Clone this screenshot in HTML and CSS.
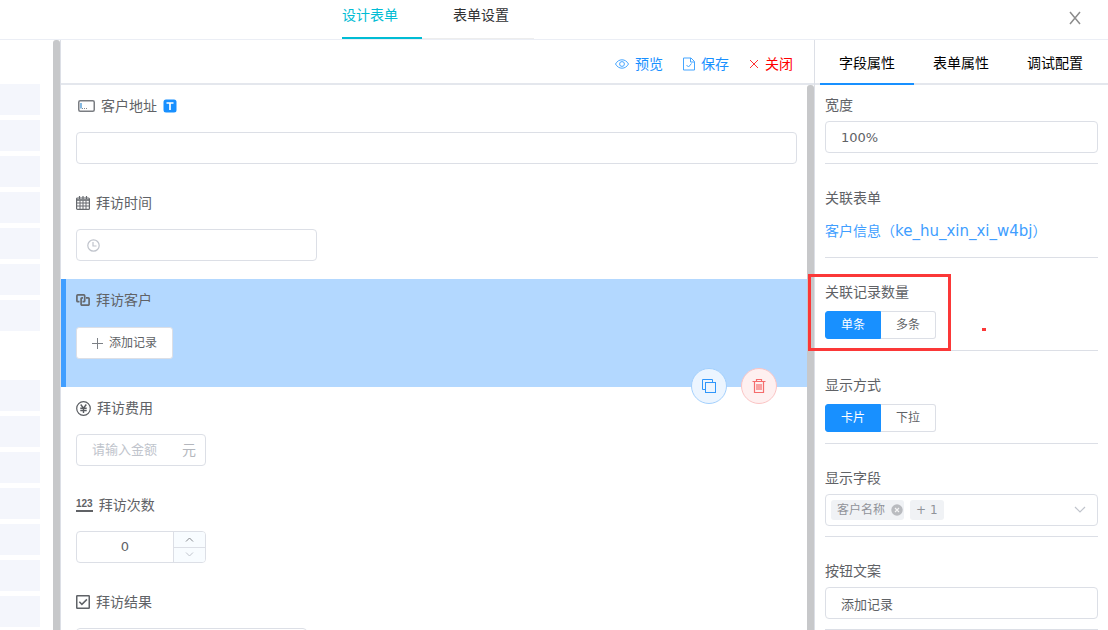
FILE: index.html
```html
<!DOCTYPE html>
<html lang="zh-CN">
<head>
<meta charset="utf-8">
<meta name="viewport" content="width=device-width, initial-scale=1">
<title>设计表单</title>
<link rel="stylesheet" href="styles.css">
</head>
<body>
<header class="topbar">
  <nav class="top-tabs">
    <button class="top-tab is-active" type="button">设计表单</button>
    <button class="top-tab" type="button">表单设置</button>
  </nav>
  <button class="window-close" type="button" aria-label="关闭窗口">
    <svg width="14" height="14" viewBox="0 0 14 14"><path d="M2 1l10 12M12 1L2 13" fill="none" stroke="#8c8c8c" stroke-width="1.5"/></svg>
  </button>
</header>

<div class="workspace">
  <aside class="palette">
    <div class="palette-list">
      <div class="palette-group">
        <div class="palette-item"></div><div class="palette-item"></div><div class="palette-item"></div><div class="palette-item"></div><div class="palette-item"></div><div class="palette-item"></div><div class="palette-item"></div>
      </div>
      <div class="palette-group">
        <div class="palette-item"></div><div class="palette-item"></div><div class="palette-item"></div><div class="palette-item"></div><div class="palette-item"></div><div class="palette-item"></div><div class="palette-item"></div>
      </div>
    </div>
    <div class="scrollbar"></div>
  </aside>

  <main class="designer">
    <div class="toolbar">
      <button class="tool" type="button">
        <svg width="14" height="14" viewBox="0 0 14 14" fill="none" stroke="currentColor" opacity=".8"><path d="M.5 7C2 4.300 4.300 2.800 7 2.800S12 4.300 13.500 7C12 9.700 9.700 11.200 7 11.200S2 9.700.5 7z"/><circle cx="7" cy="7" r="2.400"/></svg>
        预览
      </button>
      <button class="tool" type="button">
        <svg width="12" height="14" viewBox="0 0 12 14" fill="none" stroke="currentColor" opacity=".8"><path d="M.5 1h7.500l3.500 3.500V13H.5zM7.500 1v4h4M3.500 8l2 2 3-3.500"/></svg>
        保存
      </button>
      <button class="tool tool-danger" type="button">
        <svg width="10" height="10" viewBox="0 0 10 10" fill="none" stroke="currentColor" opacity=".8"><path d="M1 1l8 8M9 1L1 9"/></svg>
        关闭
      </button>
    </div>

    <div class="canvas">
      <form class="form">
        <section class="field">
          <label class="field-label" for="address">
            <svg class="icon-text" width="17" height="12" viewBox="0 0 17 12" fill="none"><rect x=".75" y=".75" width="15.500" height="10.500" rx="1.500" stroke="#7a7d82" stroke-width="1.500"/><path d="M3 3v5.500" stroke="#5fa3d8" stroke-width="1.500"/><path d="M4 8.500h5" stroke="#85888d" stroke-dasharray="1 1"/></svg>
            客户地址
            <svg width="14" height="14" viewBox="0 0 14 14"><rect x=".5" y=".5" width="13" height="13" rx="2.500" fill="#1890ff"/><path d="M3.500 4h7M7 4v7" fill="none" stroke="#fff" stroke-width="1.700"/></svg>
          </label>
          <input class="control" id="address" type="text">
        </section>

        <section class="field">
          <label class="field-label" for="visit-time">
            <svg width="14" height="14" viewBox="0 0 14 14" fill="none" stroke="#66696e"><rect x=".6" y="2" width="12.800" height="11.400" rx="1" stroke-width="1.200"/><path d="M1 4h12" stroke-width="1.600"/><path d="M3.500 0v3M7 0v3M10.500 0v3" stroke-width="1.200"/><path d="M1 7h12M1 10h12M4 4.500V13M7 4.500V13M10 4.500V13"/></svg>
            拜访时间
          </label>
          <div class="control date-box">
            <svg width="13" height="13" viewBox="0 0 13 13" fill="none" stroke="#c0c4cc" stroke-width="1.200"><circle cx="6.500" cy="6.500" r="5.700"/><path d="M6 3v4h3.500"/></svg>
            <input class="bare-input" id="visit-time" type="text">
          </div>
        </section>

        <section class="field is-selected">
          <span class="field-label">
            <svg width="14" height="12" viewBox="0 0 14 12" fill="none" stroke="#66696e" stroke-width="1.700"><path d="M3.500 7.700H1.800A1 1 0 0 1 .9 6.800V1.800a1 1 0 0 1 .9-.9h6a1 1 0 0 1 .9.900v5a1 1 0 0 1-.9.900H6.500"/><path d="M10 3.900h2.200a.9.9 0 0 1 .9.900v5.400a.9.9 0 0 1-.9.900H6a.9.900 0 0 1-.9-.9V4.800a.9.900 0 0 1 .9-.9h1"/></svg>
            拜访客户
          </span>
          <button class="add-record" type="button">
            <svg width="11" height="11" viewBox="0 0 11 11"><path d="M5.500 0v11M0 5.500h11" stroke="#7c8085"/></svg>
            添加记录
          </button>
          <div class="field-actions">
            <button class="round round-copy" type="button" aria-label="复制">
              <svg width="16" height="16" viewBox="0 0 16 16" fill="none" stroke="#2f96fb"><path d="M4 11.500H1.500v-10h10V4"/><rect x="4.500" y="4.500" width="10" height="10"/></svg>
            </button>
            <button class="round round-delete" type="button" aria-label="删除">
              <svg width="14" height="16" viewBox="0 0 14 16" fill="none" stroke="#f56c6c"><path d="M.5 3.500h13M4.500 3.500v-2h5v2M2.500 3.500v11h9v-11M5 6v6M7 6v6M9 6v6" stroke-width="1.200"/></svg>
            </button>
          </div>
        </section>

        <section class="field">
          <label class="field-label" for="cost">
            <svg width="15" height="15" viewBox="0 0 15 15" fill="none" stroke="#5a5d62"><circle cx="7.500" cy="7.500" r="6.800" stroke-width="1.200"/><path d="M4.700 3.500l2.800 3.600 2.800-3.600M7.500 7v5M4.300 7.300h6.400M4.300 9.500h6.400" stroke-width="1.400"/></svg>
            拜访费用
          </label>
          <div class="control money-box">
            <input class="bare-input" id="cost" type="text" placeholder="请输入金额">
            <span class="unit">元</span>
          </div>
        </section>

        <section class="field">
          <label class="field-label" for="count">
            <span class="icon-123" aria-hidden="true">123</span>
            拜访次数
          </label>
          <div class="control number-box">
            <input class="bare-input" id="count" type="text" inputmode="numeric" value="0">
            <div class="steps">
              <button class="step" type="button" aria-label="增加"><svg width="9" height="5" viewBox="0 0 9 5"><path d="M1 4.500l3.500-3.500L8 4.500" fill="none" stroke="#85888d"/></svg></button>
              <button class="step" type="button" aria-label="减少"><svg width="9" height="5" viewBox="0 0 9 5"><path d="M1 .5L4.500 4 8 .5" fill="none" stroke="#c0c4cc"/></svg></button>
            </div>
          </div>
        </section>

        <section class="field">
          <label class="field-label" for="result">
            <svg width="14" height="14" viewBox="0 0 14 14" fill="none" stroke="#5f6267"><rect x=".75" y=".75" width="12.500" height="12.500" rx=".5" stroke-width="1.500"/><path d="M3.300 6.800l2.600 2.600 5-5" stroke-width="1.500"/></svg>
            拜访结果
          </label>
          <input class="control result-box" id="result" type="text">
        </section>
      </form>
      <div class="scrollbar"></div>
    </div>
  </main>

  <aside class="inspector">
    <nav class="side-tabs">
      <button class="side-tab is-active" type="button">字段属性</button>
      <button class="side-tab" type="button">表单属性</button>
      <button class="side-tab" type="button">调试配置</button>
    </nav>
    <form class="props">
      <div class="prop">
        <label class="prop-label" for="width">宽度</label>
        <input class="control" id="width" type="text" value="100%">
      </div>
      <div class="prop">
        <span class="prop-label">关联表单</span>
        <a class="form-link" href="#form">客户信息（<span class="form-key">ke_hu_xin_xi_w4bj</span>）</a>
      </div>
      <div class="prop" role="radiogroup" aria-labelledby="amount-label">
        <span class="prop-label" id="amount-label">关联记录数量</span>
        <div class="segments">
          <label class="segment"><input type="radio" name="amount" checked><span>单条</span></label>
          <label class="segment"><input type="radio" name="amount"><span>多条</span></label>
        </div>
        <div class="mark-box"></div>
        <div class="mark-dot"></div>
      </div>
      <div class="prop" role="radiogroup" aria-labelledby="mode-label">
        <span class="prop-label" id="mode-label">显示方式</span>
        <div class="segments">
          <label class="segment"><input type="radio" name="mode" checked><span>卡片</span></label>
          <label class="segment"><input type="radio" name="mode"><span>下拉</span></label>
        </div>
      </div>
      <div class="prop">
        <span class="prop-label" id="columns-label">显示字段</span>
        <div class="control tag-select" role="combobox" aria-expanded="false" aria-labelledby="columns-label" tabindex="0">
          <span class="tag">客户名称
            <button class="tag-remove" type="button" aria-label="移除"><svg width="12" height="12" viewBox="0 0 12 12"><circle cx="6" cy="6" r="5.700" fill="#b9bbbf"/><path d="M4 4l4 4M8 4L4 8" stroke="#f4f4f5" stroke-width="1.200"/></svg></button>
          </span>
          <span class="tag tag-more">+ 1</span>
          <svg class="chevron" width="12" height="8" viewBox="0 0 12 8"><path d="M1 1l5 5 5-5" fill="none" stroke="#c0c4cc" stroke-width="1.200"/></svg>
        </div>
      </div>
      <div class="prop">
        <label class="prop-label" for="button-text">按钮文案</label>
        <input class="control" id="button-text" type="text" value="添加记录">
      </div>
    </form>
  </aside>
</div>
</body>
</html>
```

FILE: styles.css
```css
* { box-sizing: border-box; }

body {
  margin: 0;
  height: 100vh;
  display: flex;
  flex-direction: column;
  overflow: hidden;
  background: #fff;
  color: #606266;
  font: 14px/20px "DejaVu Sans", "Noto Sans CJK SC", sans-serif;
}

button, input { font: inherit; color: inherit; margin: 0; }
button { padding: 0; border: 0; background: none; cursor: pointer; }
svg { display: block; flex: none; }

/* Header */
.topbar {
  flex: none;
  height: 40px;
  display: flex;
  justify-content: space-between;
  border-bottom: 1px solid #ebeef5;
  padding: 0 26px 0 342px;
}
.top-tabs { display: flex; }
.top-tab {
  padding: 0 25px 8px 31px;
  color: #303133;
  border-bottom: 1px solid #ededed;
}
.top-tab.is-active {
  padding: 0 24px 8px 0;
  color: #00bcd4;
  border-bottom: 2px solid #00bcd4;
}
.window-close { padding-bottom: 4px; }

.workspace { flex: 1; min-height: 0; display: flex; }
.scrollbar { flex: none; width: 7px; background: #c7c8ca; border-radius: 3px 3px 0 0; }

/* Component palette */
.palette {
  flex: none;
  width: 61px;
  display: flex;
  border-right: 1px solid #dcdfe6;
  overflow: hidden;
}
.palette-list {
  flex: 1;
  display: flex;
  flex-direction: column;
  gap: 49px;
  padding: 44px 13px 0 0;
}
.palette-group { display: flex; flex-direction: column; gap: 5px; }
.palette-item { height: 31px; background: #f4f6fc; }

/* Designer */
.designer { flex: 1; min-width: 0; display: flex; flex-direction: column; }
.toolbar {
  flex: none;
  height: 45px;
  display: flex;
  justify-content: flex-end;
  gap: 20px;
  padding: 5px 21px 0 0;
  border-bottom: 2px solid #e4e7ed;
}
.tool { display: flex; align-items: center; gap: 6px; color: #1890ff; }
.tool-danger { color: #f00; }
.canvas { flex: 1; min-height: 0; display: flex; }
.form { flex: 1; min-width: 0; overflow: hidden; }
.field { position: relative; padding: 11px 10px 18px 15px; }
.field-label {
  display: flex;
  align-items: center;
  gap: 6px;
  width: fit-content;
  margin-bottom: 16px;
}
.icon-text { margin-left: 2px; }
.is-selected {
  padding: 11px 10px 28px;
  border-left: 5px solid #409eff;
  background: #b3d8ff;
}
.is-selected .field-label { margin-bottom: 17px; }

.control {
  display: block;
  width: 100%;
  height: 32px;
  padding: 0 15px;
  border: 1px solid #dcdfe6;
  border-radius: 4px;
  background: #fff;
  font-size: 13px;
}
.bare-input {
  min-width: 0;
  flex: 1;
  padding: 0;
  border: 0;
  outline: 0;
  background: none;
}
::placeholder { color: #c0c4cc; opacity: 1; }
.date-box { display: flex; align-items: center; gap: 8px; width: 241px; padding: 0 10px; }
.money-box { display: flex; align-items: center; width: 130px; padding-right: 9px; }
.unit { color: #b4b7bd; font-size: 14px; }
.number-box { display: flex; width: 130px; padding: 0; overflow: hidden; }
.number-box .bare-input { text-align: center; }
.steps {
  width: 32px;
  display: flex;
  flex-direction: column;
  border-left: 1px solid #dcdfe6;
  background: #f8fcff;
}
.step { flex: 1; display: grid; place-items: center; }
.step + .step { border-top: 1px solid #dcdfe6; }
.result-box { width: 231px; }
.icon-123 {
  border-bottom: 2px solid #606266;
  font: bold 10px/12px "Liberation Sans", sans-serif;
}

.add-record {
  display: flex;
  align-items: center;
  gap: 6px;
  height: 32px;
  padding: 0 15px;
  border: 1px solid #dcdfe6;
  border-radius: 3px;
  background: #fff;
  font-size: 12px;
}
.field-actions {
  position: absolute;
  right: 30px;
  bottom: -17px;
  z-index: 1;
  display: flex;
  gap: 14px;
}
.round {
  width: 36px;
  height: 36px;
  display: grid;
  place-items: center;
  border: 1px solid #a3d0fd;
  border-radius: 50%;
  background: #ecf5ff;
}
.round-delete { border-color: #fbc4c4; background: #fef0f0; }

/* Inspector */
.inspector {
  flex: none;
  width: 294px;
  display: flex;
  flex-direction: column;
  border-left: 1px solid #dcdfe6;
}
.side-tabs {
  flex: none;
  height: 45px;
  display: flex;
  padding-left: 5px;
  box-shadow: inset 0 -2px #e4e7ed;
}
.side-tab { padding: 2px 19px 0; border-bottom: 2px solid transparent; color: #000; }
.side-tab.is-active { border-bottom-color: #1890ff; }
.props { padding: 10px 10px 0; }
.prop {
  position: relative;
  margin-bottom: 24px;
  padding-bottom: 10px;
  border-bottom: 1px solid #dcdfe6;
}
.prop-label { display: block; margin-bottom: 6px; }
.form-link { display: block; padding: 7px 0 6px; color: #409eff; text-decoration: none; }
.form-key { font-size: 15px; }
.segments { display: flex; height: 32px; padding: 3px 0 1px; }
.segment { position: relative; cursor: pointer; }
.segment input { position: absolute; inset: 0; opacity: 0; }
.segment span {
  display: block;
  height: 28px;
  padding: 0 15px;
  border: 1px solid #dcdfe6;
  border-left: 0;
  border-radius: 0 3px 3px 0;
  background: #fff;
  font-size: 12px;
  line-height: 26px;
}
.segment:first-child span { border-left: 1px solid #dcdfe6; border-radius: 3px 0 0 3px; }
.segment input:checked + span { border-color: #1890ff; background: #1890ff; color: #fff; }
.tag-select { display: flex; align-items: center; gap: 6px; padding: 0 11px 0 5px; }
.tag {
  display: flex;
  align-items: center;
  gap: 6px;
  height: 20px;
  padding: 0 1px 0 6px;
  border-radius: 3px;
  background: #f0f2f5;
  color: #909399;
  font-size: 12px;
}
.tag-more { padding: 0 6px; }
.chevron { margin-left: auto; }

/* Red annotation around the record count setting */
.mark-box {
  position: absolute;
  left: -17px;
  top: -8px;
  width: 143px;
  height: 77px;
  border: 3px solid #fb3838;
  z-index: 2;
}
.mark-dot {
  position: absolute;
  left: 157px;
  top: 46px;
  width: 4px;
  height: 3px;
  background: #fb3838;
}
```
